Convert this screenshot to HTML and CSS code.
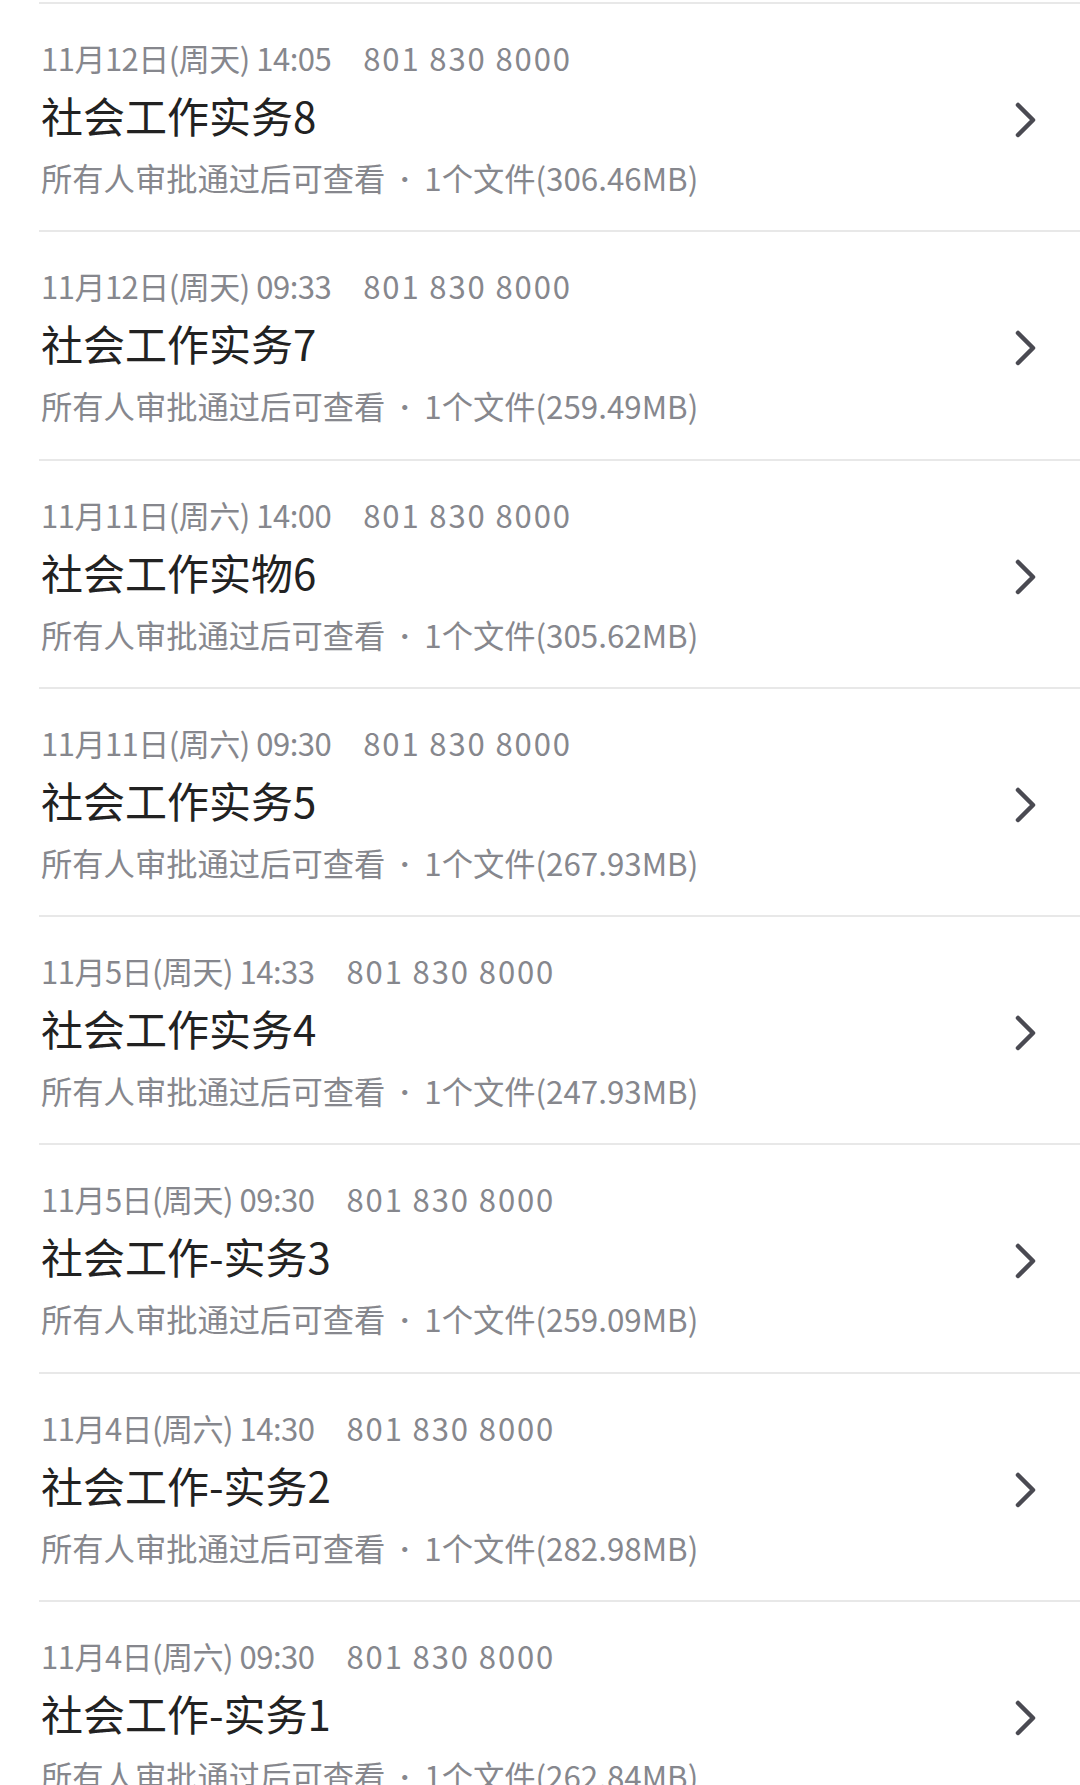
FILE: index.html
```html
<!DOCTYPE html>
<html>
<head>
    <meta charset="UTF-8">
    <title>文件列表</title>
    <link rel="stylesheet" href="styles.css">
</head>
<body>
<ul class="list">
    <li class="item">
        <div class="info">
            <p class="meta"><span class="date">11月12日(周天) 14:05</span><span class="num">801 830 8000</span></p>
            <p class="title">社会工作实务8</p>
            <p class="desc">所有人审批通过后可查看<span class="dot">·</span>1个文件(306.46MB)</p>
        </div>
        <svg class="arrow" viewBox="0 0 22 36"><polyline points="3,3 18,18 3,33"/></svg>
    </li>
    <li class="item">
        <div class="info">
            <p class="meta"><span class="date">11月12日(周天) 09:33</span><span class="num">801 830 8000</span></p>
            <p class="title">社会工作实务7</p>
            <p class="desc">所有人审批通过后可查看<span class="dot">·</span>1个文件(259.49MB)</p>
        </div>
        <svg class="arrow" viewBox="0 0 22 36"><polyline points="3,3 18,18 3,33"/></svg>
    </li>
    <li class="item">
        <div class="info">
            <p class="meta"><span class="date">11月11日(周六) 14:00</span><span class="num">801 830 8000</span></p>
            <p class="title">社会工作实物6</p>
            <p class="desc">所有人审批通过后可查看<span class="dot">·</span>1个文件(305.62MB)</p>
        </div>
        <svg class="arrow" viewBox="0 0 22 36"><polyline points="3,3 18,18 3,33"/></svg>
    </li>
    <li class="item">
        <div class="info">
            <p class="meta"><span class="date">11月11日(周六) 09:30</span><span class="num">801 830 8000</span></p>
            <p class="title">社会工作实务5</p>
            <p class="desc">所有人审批通过后可查看<span class="dot">·</span>1个文件(267.93MB)</p>
        </div>
        <svg class="arrow" viewBox="0 0 22 36"><polyline points="3,3 18,18 3,33"/></svg>
    </li>
    <li class="item">
        <div class="info">
            <p class="meta"><span class="date">11月5日(周天) 14:33</span><span class="num">801 830 8000</span></p>
            <p class="title">社会工作实务4</p>
            <p class="desc">所有人审批通过后可查看<span class="dot">·</span>1个文件(247.93MB)</p>
        </div>
        <svg class="arrow" viewBox="0 0 22 36"><polyline points="3,3 18,18 3,33"/></svg>
    </li>
    <li class="item">
        <div class="info">
            <p class="meta"><span class="date">11月5日(周天) 09:30</span><span class="num">801 830 8000</span></p>
            <p class="title">社会工作-实务3</p>
            <p class="desc">所有人审批通过后可查看<span class="dot">·</span>1个文件(259.09MB)</p>
        </div>
        <svg class="arrow" viewBox="0 0 22 36"><polyline points="3,3 18,18 3,33"/></svg>
    </li>
    <li class="item">
        <div class="info">
            <p class="meta"><span class="date">11月4日(周六) 14:30</span><span class="num">801 830 8000</span></p>
            <p class="title">社会工作-实务2</p>
            <p class="desc">所有人审批通过后可查看<span class="dot">·</span>1个文件(282.98MB)</p>
        </div>
        <svg class="arrow" viewBox="0 0 22 36"><polyline points="3,3 18,18 3,33"/></svg>
    </li>
    <li class="item">
        <div class="info">
            <p class="meta"><span class="date">11月4日(周六) 09:30</span><span class="num">801 830 8000</span></p>
            <p class="title">社会工作-实务1</p>
            <p class="desc">所有人审批通过后可查看<span class="dot">·</span>1个文件(262.84MB)</p>
        </div>
        <svg class="arrow" viewBox="0 0 22 36"><polyline points="3,3 18,18 3,33"/></svg>
    </li>
</ul>
</body>
</html>
```

FILE: styles.css
```css
* {
    margin: 0;
    padding: 0;
}

ul, li {
    list-style: none;
}

html, body {
    width: 100%;
    height: 100%;
    overflow: hidden;
    background: #fff;
}

body {
    font-family: "Noto Sans CJK SC", "Noto Sans", sans-serif;
    color: #222;
}

.list {
    margin: 2px 0 0 39px;
    border-top: 2px solid #e8e8e8;
}

.item {
    display: flex;
    align-items: flex-start;
    padding: 34px 43px 32.3px 2px;
    border-bottom: 2px solid #e8e8e8;
}

.info {
    flex: 1;
}

.meta {
    font-size: 31px;
    line-height: 40px;
    color: #86878d;
    white-space: nowrap;
}

.meta .date {
    letter-spacing: -0.5px;
}

.meta .num {
    margin-left: 32px;
    letter-spacing: 1.9px;
}

.title {
    margin-top: 9px;
    font-size: 42px;
    line-height: 56px;
    color: #222;
}

.desc {
    margin-top: 15px;
    height: 40px;
    font-size: 31.3px;
    line-height: 40px;
    color: #86878d;
    white-space: nowrap;
}

.desc .dot {
    display: inline-block;
    vertical-align: top;
    width: 39px;
    font-size: 24px;
    line-height: 40px;
    text-align: center;
}

.arrow {
    width: 22px;
    height: 36px;
    margin-top: 64px;
    fill: none;
    stroke: #4a4a52;
    stroke-width: 4.5;
    stroke-linecap: round;
    stroke-linejoin: round;
}
```
